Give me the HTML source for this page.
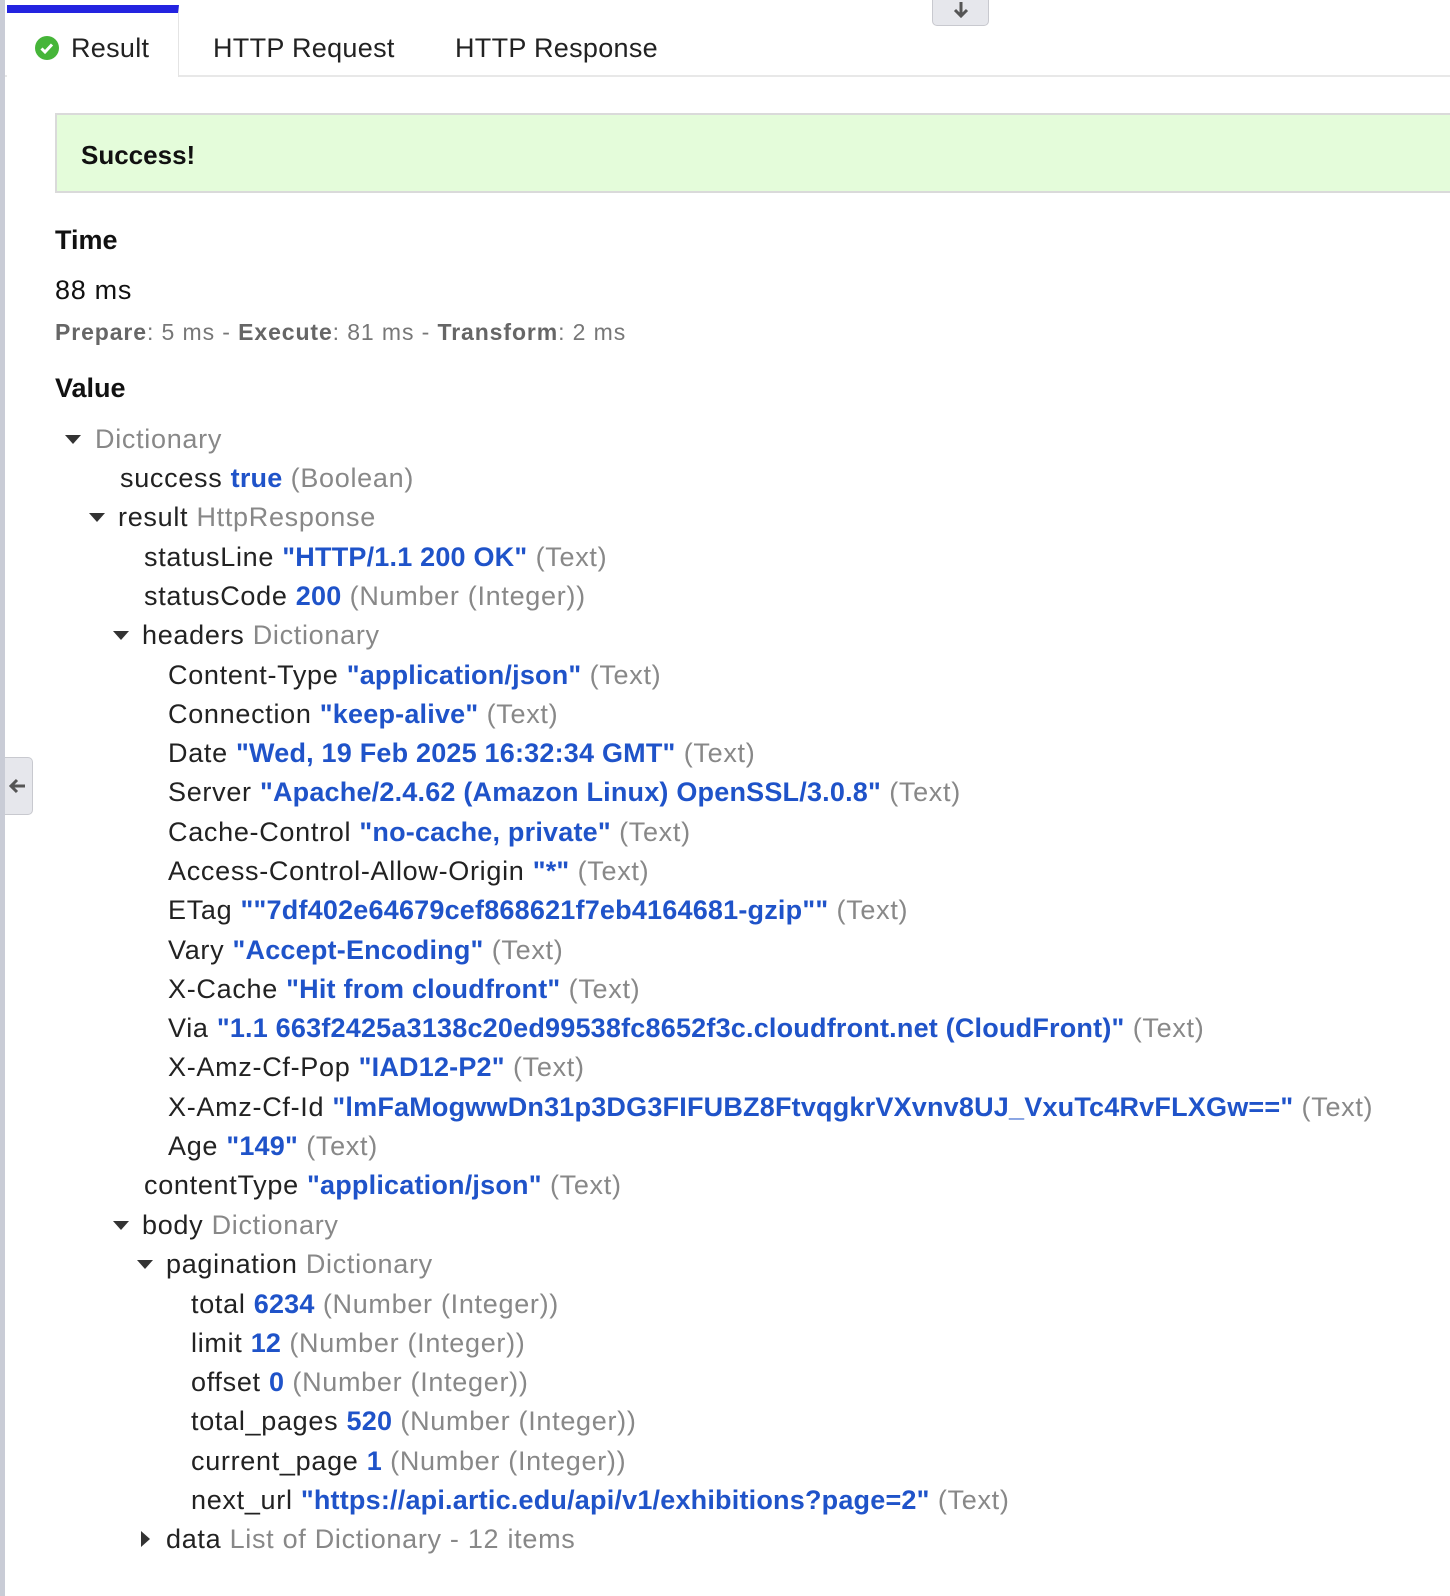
<!DOCTYPE html>
<html><head><meta charset="utf-8"><style>
html,body{margin:0;padding:0;background:#fff;width:1450px;height:1596px;overflow:hidden;font-family:"Liberation Sans",sans-serif;color:#222;position:relative}
.lb{position:absolute;left:0;top:0;width:5px;height:1596px;background:#c9ccd6}
.tabbar{position:absolute;left:5px;top:0;width:1445px;height:75px;border-bottom:2px solid #e8e8e8}
.act{position:absolute;left:7px;top:5px;width:172px;height:72px;background:#fff;border-right:1px solid #e4e4e4;border-top:8px solid #2323e0;box-sizing:border-box}
.tab{position:absolute;top:28px;font-size:27px;line-height:40px;color:#222;letter-spacing:.3px}
.dl{position:absolute;left:932px;top:-4px;width:57px;height:30px;background:#e6e7ec;border:1px solid #c8c9cf;border-radius:0 0 5px 5px;box-sizing:border-box}
.succ{position:absolute;left:55px;top:113px;width:1400px;height:80px;background:#e4fcda;border:2px solid #dadada;box-sizing:border-box}
.succ span{position:absolute;left:24px;top:20px;font-size:26px;font-weight:bold;line-height:40px;color:#111}
.h{position:absolute;left:55px;font-size:27px;font-weight:bold;line-height:40px;color:#111}
.r{position:absolute;font-size:27px;line-height:40px;white-space:nowrap;color:#222;letter-spacing:.7px}
.v{color:#1f53c9;font-weight:bold;letter-spacing:.2px}
.t{color:#888}
.tri{position:absolute;width:0;height:0;border-left:8px solid transparent;border-right:8px solid transparent;border-top:9px solid #333}
.trr{position:absolute;width:0;height:0;border-top:8px solid transparent;border-bottom:8px solid transparent;border-left:9px solid #333}
.side{position:absolute;left:5px;top:757px;width:28px;height:58px;background:#e6e7ec;border:1px solid #c8c9cf;border-left:none;border-radius:0 5px 5px 0;box-sizing:border-box}
</style></head><body>
<div class="lb"></div>
<div class="tabbar"></div>
<div class="act"></div>
<svg style="position:absolute;left:35px;top:36px" width="24" height="24" viewBox="0 0 24 24"><circle cx="12" cy="12" r="12" fill="#46b539"/><path d="M6.5 12.5l3.5 3.5 7-7.5" stroke="#fff" stroke-width="3" fill="none"/></svg>
<div class="tab" style="left:71px">Result</div>
<div class="tab" style="left:213px">HTTP Request</div>
<div class="tab" style="left:455px">HTTP Response</div>
<div class="dl"><svg style="position:absolute;left:19px;top:3px" width="18" height="20" viewBox="0 0 18 20"><path d="M9 2v13M3 10l6 6 6-6" stroke="#555" stroke-width="3" fill="none"/></svg></div>
<div class="side"><svg style="position:absolute;left:3px;top:19px" width="20" height="18" viewBox="0 0 20 18"><path d="M17 9H4M9 3L3 9l6 6" stroke="#555" stroke-width="3" fill="none"/></svg></div>
<div class="succ"><span>Success!</span></div>
<div class="h" style="top:220px">Time</div>
<div class="r" style="left:55px;top:270px;color:#111">88 ms</div>
<div class="r" style="left:55px;top:312px;font-size:23px;color:#777;letter-spacing:.9px"><b style="color:#666">Prepare</b>: 5 ms - <b style="color:#666">Execute</b>: 81 ms - <b style="color:#666">Transform</b>: 2 ms</div>
<div class="h" style="top:368px">Value</div>

<div class="tri" style="left:65px;top:435px"></div>
<div class="r t" style="left:95px;top:419px">Dictionary</div>
<div class="r" style="left:120px;top:458px">success <span class="v">true</span> <span class="t">(Boolean)</span></div>
<div class="tri" style="left:89px;top:513px"></div>
<div class="r" style="left:118px;top:497px">result <span class="t">HttpResponse</span></div>
<div class="r" style="left:144px;top:537px">statusLine <span class="v">"HTTP/1.1 200 OK"</span> <span class="t">(Text)</span></div>
<div class="r" style="left:144px;top:576px">statusCode <span class="v">200</span> <span class="t">(Number (Integer))</span></div>
<div class="tri" style="left:113px;top:631px"></div>
<div class="r" style="left:142px;top:615px">headers <span class="t">Dictionary</span></div>
<div class="r" style="left:168px;top:655px">Content-Type <span class="v">"application/json"</span> <span class="t">(Text)</span></div>
<div class="r" style="left:168px;top:694px">Connection <span class="v">"keep-alive"</span> <span class="t">(Text)</span></div>
<div class="r" style="left:168px;top:733px">Date <span class="v">"Wed, 19 Feb 2025 16:32:34 GMT"</span> <span class="t">(Text)</span></div>
<div class="r" style="left:168px;top:772px">Server <span class="v">"Apache/2.4.62 (Amazon Linux) OpenSSL/3.0.8"</span> <span class="t">(Text)</span></div>
<div class="r" style="left:168px;top:812px">Cache-Control <span class="v">"no-cache, private"</span> <span class="t">(Text)</span></div>
<div class="r" style="left:168px;top:851px">Access-Control-Allow-Origin <span class="v">"*"</span> <span class="t">(Text)</span></div>
<div class="r" style="left:168px;top:890px">ETag <span class="v">""7df402e64679cef868621f7eb4164681-gzip""</span> <span class="t">(Text)</span></div>
<div class="r" style="left:168px;top:930px">Vary <span class="v">"Accept-Encoding"</span> <span class="t">(Text)</span></div>
<div class="r" style="left:168px;top:969px">X-Cache <span class="v">"Hit from cloudfront"</span> <span class="t">(Text)</span></div>
<div class="r" style="left:168px;top:1008px">Via <span class="v">"1.1 663f2425a3138c20ed99538fc8652f3c.cloudfront.net (CloudFront)"</span> <span class="t">(Text)</span></div>
<div class="r" style="left:168px;top:1047px">X-Amz-Cf-Pop <span class="v">"IAD12-P2"</span> <span class="t">(Text)</span></div>
<div class="r" style="left:168px;top:1087px">X-Amz-Cf-Id <span class="v">"lmFaMogwwDn31p3DG3FIFUBZ8FtvqgkrVXvnv8UJ_VxuTc4RvFLXGw=="</span> <span class="t">(Text)</span></div>
<div class="r" style="left:168px;top:1126px">Age <span class="v">"149"</span> <span class="t">(Text)</span></div>
<div class="r" style="left:144px;top:1165px">contentType <span class="v">"application/json"</span> <span class="t">(Text)</span></div>
<div class="tri" style="left:113px;top:1221px"></div>
<div class="r" style="left:142px;top:1205px">body <span class="t">Dictionary</span></div>
<div class="tri" style="left:137px;top:1260px"></div>
<div class="r" style="left:166px;top:1244px">pagination <span class="t">Dictionary</span></div>
<div class="r" style="left:191px;top:1284px">total <span class="v">6234</span> <span class="t">(Number (Integer))</span></div>
<div class="r" style="left:191px;top:1323px">limit <span class="v">12</span> <span class="t">(Number (Integer))</span></div>
<div class="r" style="left:191px;top:1362px">offset <span class="v">0</span> <span class="t">(Number (Integer))</span></div>
<div class="r" style="left:191px;top:1401px">total_pages <span class="v">520</span> <span class="t">(Number (Integer))</span></div>
<div class="r" style="left:191px;top:1441px">current_page <span class="v">1</span> <span class="t">(Number (Integer))</span></div>
<div class="r" style="left:191px;top:1480px">next_url <span class="v">"https://api.artic.edu/api/v1/exhibitions?page=2"</span> <span class="t">(Text)</span></div>
<div class="trr" style="left:141px;top:1531px"></div>
<div class="r" style="left:166px;top:1519px">data <span class="t">List of Dictionary - 12 items</span></div>
</body></html>
